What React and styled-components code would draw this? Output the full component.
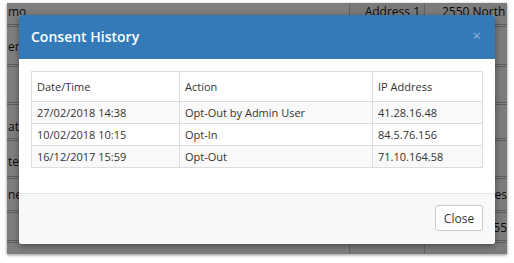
import React from 'react';
import styled, { createGlobalStyle } from 'styled-components';

const GlobalStyle = createGlobalStyle`
  html, body {
    margin: 0;
    padding: 0;
    background: #ffffff;
    font-family: "Open Sans", "Liberation Sans", sans-serif;
  }
`;

// Frame around the whole screenshot
const Frame = styled.div`
  width: 514px;
  height: 263px;
  box-sizing: border-box;
  padding: 3px 7px 9px 7px;
  background: #ffffff;
`;

const Shot = styled.div`
  position: relative;
  width: 500px;
  height: 251px;
  overflow: hidden;
  background: #ffffff;
  box-shadow: 0 1px 3px rgba(0, 0, 0, 0.45);
`;

// Page underneath the modal
const Page = styled.div`
  display: flex;
  flex-direction: column;
  font-size: 12px;
  color: #111;
`;

const PageRow = styled.div`
  display: grid;
  grid-template-columns: 343px 75px 1fr;
  height: ${(p) => p.h}px;
  box-sizing: border-box;
  border-bottom: 3px double #b8b8b8;
`;

const PageCell = styled.div`
  box-sizing: border-box;
  padding: ${(p) => p.top || 0}px ${(p) => p.right || 0}px 0 ${(p) => p.left || 0}px;
  border-right: ${(p) => (p.line ? '1px solid #c4c4c4' : 'none')};
  background: ${(p) => p.bg || '#fdfdfd'};
  text-align: ${(p) => p.align || 'left'};
  white-space: nowrap;
  overflow: hidden;
  line-height: 16px;
`;

const Overlay = styled.div`
  position: absolute;
  inset: 0;
  background: rgba(0, 0, 0, 0.5);
`;

// Modal
const Modal = styled.div`
  position: absolute;
  left: 12px;
  top: 12px;
  width: 476px;
  height: 229px;
  background: #ffffff;
  border-radius: 3px;
  box-shadow: 0 2px 6px rgba(0, 0, 0, 0.4);
  display: flex;
  flex-direction: column;
  overflow: hidden;
`;

const Header = styled.div`
  height: 44px;
  background: #337ab7;
  display: flex;
  align-items: center;
  justify-content: space-between;
  padding: 0 14px 0 12px;
  box-sizing: border-box;
`;

const Title = styled.h4`
  margin: 0;
  color: #ffffff;
  font-size: 14px;
  font-weight: 600;
  margin-top: -1px;
`;

const CloseX = styled.span`
  color: #8fb3d6;
  font-size: 15px;
  line-height: 1;
  margin-top: -4px;
`;

const Body = styled.div`
  padding: 12px 12px 0 12px;
  height: 134px;
  box-sizing: border-box;
`;

const Table = styled.table`
  width: 452px;
  border-collapse: collapse;
  font-size: 11px;
  color: #333;
`;

const Th = styled.th`
  text-align: left;
  font-weight: 400;
  height: 29px;
  padding: 0 5px;
  border: 1px solid #dddddd;
`;

const Td = styled.td`
  height: 21px;
  padding: 0 5px;
  border: 1px solid #dddddd;
  background: ${(p) => (p.odd ? '#f9f9f9' : '#ffffff')};
`;

const Footer = styled.div`
  flex: 1;
  border-top: 1px solid #e5e5e5;
  background: #f7f8fa;
  display: flex;
  justify-content: flex-end;
  align-items: center;
  padding: 0 12px;
`;

const Button = styled.button`
  font-family: inherit;
  font-size: 12px;
  color: #333;
  background: #ffffff;
  border: 1px solid #cccccc;
  border-radius: 3px;
  width: 48px;
  height: 26px;
  padding: 0;
  margin-top: -2px;
`;

const rows = [
  ['27/02/2018 14:38', 'Opt-Out by Admin User', '41.28.16.48'],
  ['10/02/2018 10:15', 'Opt-In', '84.5.76.156'],
  ['16/12/2017 15:59', 'Opt-Out', '71.10.164.58'],
];

const pageRows = [
  { h: 24, top: 1, a: 'mo', b: 'Address 1', c: '2550 North Lamar', left: 17 },
  { h: 40, top: 12, a: 'er', b: '', c: '' },
  { h: 38, top: 0, a: '', b: '', c: '' },
  { h: 36, top: 14, a: 'attl', b: '', c: '' },
  { h: 38, top: 13, a: 'ter', b: '', c: '' },
  { h: 34, top: 8, a: 'ne', b: '', c: 'Notes', right: 0 },
  { h: 30, top: 7, a: '', b: '', c: '1155', right: 0 },
  { h: 30, top: 0, a: '', b: '', c: '' },
];

export default function App() {
  return (
    <>
      <GlobalStyle />
      <Frame>
        <Shot>
          <Page>
            {pageRows.map((r, i) => (
              <PageRow key={i} h={r.h}>
                <PageCell top={r.top} left={1} line>{r.a}</PageCell>
                <PageCell top={r.top} right={4} align="right" line bg="#f2f2f2">{r.b}</PageCell>
                <PageCell
                  top={r.top}
                  left={r.left || 0}
                  align={r.left ? 'left' : 'right'}
                  bg="#f7f7f7"
                >
                  {r.c}
                </PageCell>
              </PageRow>
            ))}
          </Page>
          <Overlay />
          <Modal>
            <Header>
              <Title>Consent History</Title>
              <CloseX>×</CloseX>
            </Header>
            <Body>
              <Table>
                <thead>
                  <tr>
                    <Th style={{ width: 137 }}>Date/Time</Th>
                    <Th style={{ width: 182 }}>Action</Th>
                    <Th>IP Address</Th>
                  </tr>
                </thead>
                <tbody>
                  {rows.map((r, i) => (
                    <tr key={i}>
                      <Td odd={i % 2 === 0}>{r[0]}</Td>
                      <Td odd={i % 2 === 0}>{r[1]}</Td>
                      <Td odd={i % 2 === 0}>{r[2]}</Td>
                    </tr>
                  ))}
                </tbody>
              </Table>
            </Body>
            <Footer>
              <Button>Close</Button>
            </Footer>
          </Modal>
        </Shot>
      </Frame>
    </>
  );
}
